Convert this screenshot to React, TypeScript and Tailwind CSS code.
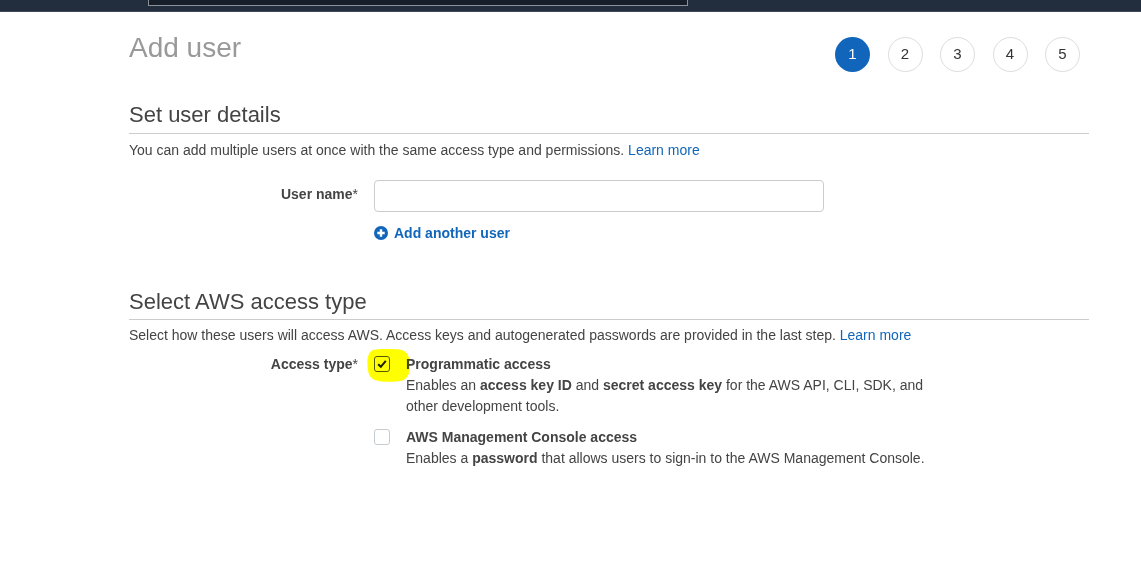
import React from "react";

function Step({ n, active }: { n: number; active?: boolean }) {
  return (
    <div
      className={
        active
          ? "flex h-[35px] w-[35px] items-center justify-center rounded-full bg-[#1166bb] text-[15px] text-white"
          : "flex h-[35px] w-[35px] items-center justify-center rounded-full border border-[#dddddd] bg-white text-[15px] text-[#333]"
      }
    >
      {n}
    </div>
  );
}

function SectionHeader({ title, mt, pb }: { title: string; mt: string; pb: string }) {
  return (
    <div className={`${mt} ${pb} border-b border-[#cccccc] text-[22px] leading-[24px] text-[#444]`}>
      {title}
    </div>
  );
}

export default function App() {
  return (
    <div className="min-h-[567px] bg-white font-['Liberation_Sans',Arial,sans-serif] text-[14px] text-[#444]">
      {/* top bar */}
      <div className="h-[12px] border-b border-[#3d4756] bg-[#222d3d]">
        <div className="ml-[148px] h-[6px] w-[540px] border-x border-b border-[#8d9096] bg-[#161e2a]" />
      </div>

      <div className="ml-[129px] w-[960px]">
        {/* header row */}
        <div className="flex items-start justify-between">
          <h1 className="mt-[20px] text-[28px] leading-[32px] text-[#999]">Add user</h1>
          <div className="mr-[9px] mt-[25px] flex gap-[17.5px]">
            <Step n={1} active />
            <Step n={2} />
            <Step n={3} />
            <Step n={4} />
            <Step n={5} />
          </div>
        </div>

        <SectionHeader title="Set user details" mt="mt-[31px]" pb="pb-[6px]" />
        <p className="mt-[6px] leading-[20px]">
          You can add multiple users at once with the same access type and permissions.{" "}
          <span className="text-[#1166bb]">Learn more</span>
        </p>

        <div className="mt-[20px] flex items-center">
          <div className="w-[229px] pb-[4px] text-right font-bold">
            User name<span className="font-normal">*</span>
          </div>
          <div className="ml-[16px] h-[32px] w-[450px] rounded-[4px] border border-[#cccccc] bg-white" />
        </div>
        <div className="ml-[245px] mt-[11px] flex items-center gap-[6px] font-bold leading-[20px] text-[#1166bb]">
          <svg width="14" height="14" viewBox="0 0 14 14">
            <circle cx="7" cy="7" r="7" fill="#1166bb" />
            <path d="M7 3.3v7.4M3.3 7h7.4" stroke="white" strokeWidth="2.4" />
          </svg>
          <span>Add another user</span>
        </div>

        <SectionHeader title="Select AWS access type" mt="mt-[47px]" pb="pb-[5px]" />
        <p className="mt-[5px] leading-[20px]">
          Select how these users will access AWS. Access keys and autogenerated passwords are provided in the last step.{" "}
          <span className="text-[#1166bb]">Learn more</span>
        </p>

        <div className="mt-[9px] flex">
          <div className="w-[229px] text-right font-bold leading-[20px]">
            Access type<span className="font-normal">*</span>
          </div>
          <div className="ml-[16px] flex flex-col gap-[10px]">
            <div className="flex">
              <div className="relative mt-[2px] h-[16px] w-[16px] shrink-0">
                <div className="flex h-[16px] w-[16px] items-center justify-center rounded-[3px] border border-[#505a66] bg-white">
                  <svg width="12" height="12" viewBox="0 0 12 12">
                    <path d="M2.2 6.3 L4.8 8.8 L9.8 2.8" fill="none" stroke="#1a1f26" strokeWidth="2" />
                  </svg>
                </div>
                <svg
                  className="pointer-events-none absolute left-[-7px] top-[-7px] mix-blend-multiply"
                  width="44"
                  height="34"
                  viewBox="0 0 44 34"
                >
                  <path
                    d="M6 1 C15 -0.5 28 -0.5 35 1 C41 3 43 9 43 17 C43 25 40 31 33 32 C24 33.5 14 33 8 31 C3 29 1 25 0.5 17 C0 10 1 3 6 1 Z"
                    fill="#ffff00"
                  />
                </svg>
              </div>
              <div className="ml-[16px] w-[530px]">
                <div className="font-bold leading-[20px]">Programmatic access</div>
                <div className="mt-px leading-[21px]">
                  Enables an <b>access key ID</b> and <b>secret access key</b> for the AWS API, CLI, SDK, and other
                  development tools.
                </div>
              </div>
            </div>
            <div className="flex">
              <div className="mt-[2px] h-[16px] w-[16px] shrink-0 rounded-[3px] border border-[#c6cbcf] bg-white" />
              <div className="ml-[16px] w-[530px]">
                <div className="font-bold leading-[20px]">AWS Management Console access</div>
                <div className="mt-px leading-[21px]">
                  Enables a <b>password</b> that allows users to sign-in to the AWS Management Console.
                </div>
              </div>
            </div>
          </div>
        </div>
      </div>
    </div>
  );
}
